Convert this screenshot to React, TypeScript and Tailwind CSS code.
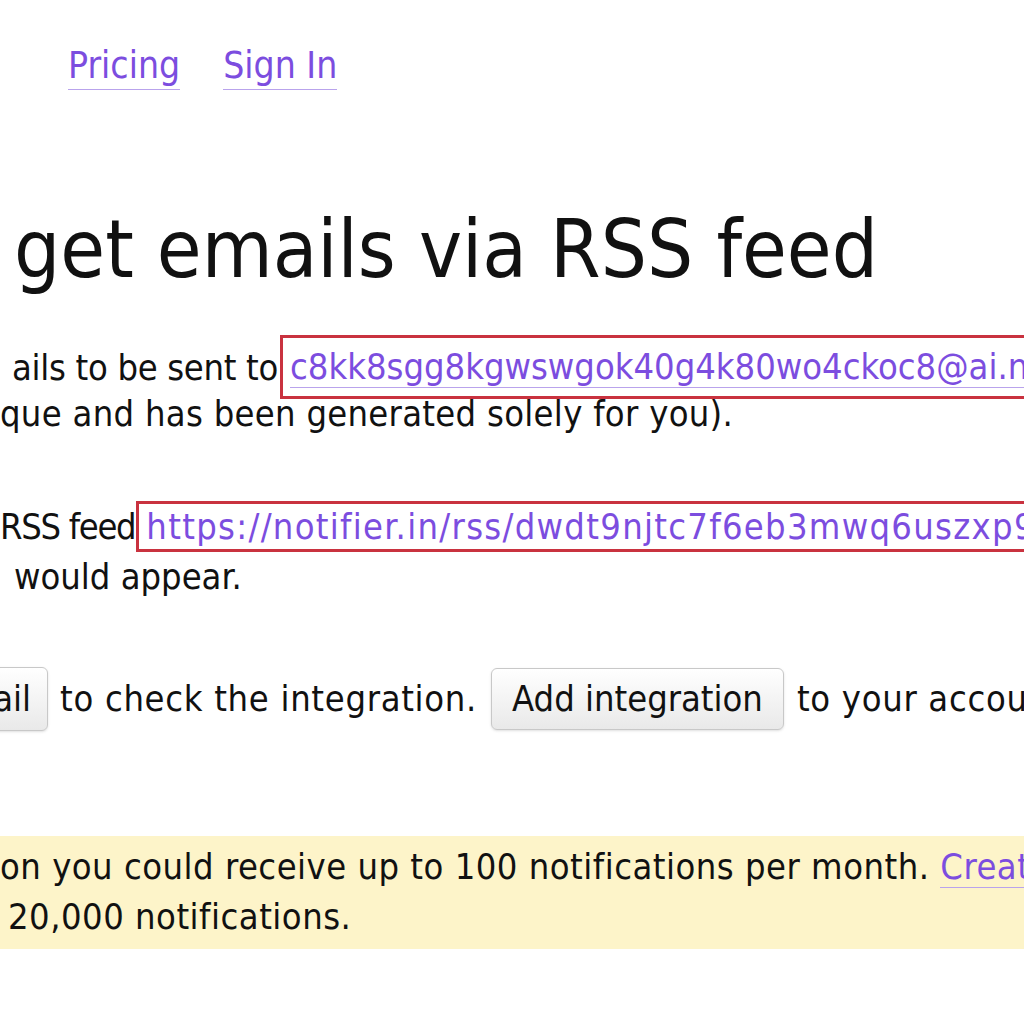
export default function App() {
  const font = { fontFamily: "Tahoma, 'DejaVu Sans Condensed', 'DejaVu Sans', sans-serif" };
  return (
    <div
      className="w-[1024px] h-[1024px] overflow-hidden bg-white text-[#111] whitespace-nowrap"
      style={font}
    >
      <nav className="flex gap-[43px] pl-[68px] pt-[43px] text-[37px] leading-[46px]">
        <a className="text-[#7c4ddf] border-b border-[#b9a3ec]">Pricing</a>
        <a className="text-[#7c4ddf] border-b border-[#b9a3ec]">Sign In</a>
      </nav>

      <h1 className="mt-[109px] pl-[14px] text-[81px] leading-[100px]">get emails via RSS feed</h1>

      <div className="mt-[36px] text-[36px] leading-[47px]">
        <div className="flex items-center">
          <span className="pl-[12px] tracking-[-0.3px]">ails to be sent to</span>
          <span className="ml-[2px] border-[3px] border-[#c9323f] pl-[7px] pr-[40px] h-[64px] flex items-center">
            <a className="text-[#7c4ddf] border-b border-[#b9a3ec] leading-[40px]">
              c8kk8sgg8kgwswgok40g4k80wo4ckoc8@ai.notifier.in
            </a>
          </span>
        </div>
        <div className="-mt-[9px] tracking-[0.3px]">que and has been generated solely for you).</div>
      </div>

      <div className="mt-[64px] text-[36px] leading-[47px]">
        <div className="flex items-center">
          <span className="tracking-[-1.3px]">RSS feed</span>
          <span className="ml-[1px] border-[3px] border-[#c9323f] pl-[7px] pr-[40px] h-[51px] flex items-center">
            <a className="text-[#7c4ddf] leading-[40px] tracking-[1.3px]">
              https://notifier.in/rss/dwdt9njtc7f6eb3mwq6uszxp9
            </a>
          </span>
        </div>
        <div className="pl-[14px] mt-[1px]">would appear.</div>
      </div>

      <div className="mt-[67px] flex items-center text-[36px]">
        <div className="w-[48px] flex justify-end">
          <button className="shrink-0 h-[64px] px-[16px] rounded-[6px] border border-[#c8c8c8] bg-gradient-to-b from-white to-[#e9e9e9] shadow-sm">
            Send test email
          </button>
        </div>
        <span className="ml-[12px] tracking-[0.7px]">to check the integration.</span>
        <button className="ml-[14px] h-[62px] px-[20px] rounded-[6px] border border-[#c8c8c8] bg-gradient-to-b from-white to-[#e9e9e9] shadow-sm">
          Add integration
        </button>
        <span className="ml-[13px] tracking-[0.7px]">to your account</span>
      </div>

      <div className="mt-[105px] h-[113px] bg-[#fdf4c9] text-[36px] leading-[50px] pt-[6px] tracking-[0.5px]">
        <div>
          on you could receive up to 100 notifications per month.{" "}
          <a className="text-[#7c4ddf] border-b border-[#b9a3ec]">Create account</a>
        </div>
        <div className="pl-[8px]">20,000 notifications.</div>
      </div>
    </div>
  );
}
